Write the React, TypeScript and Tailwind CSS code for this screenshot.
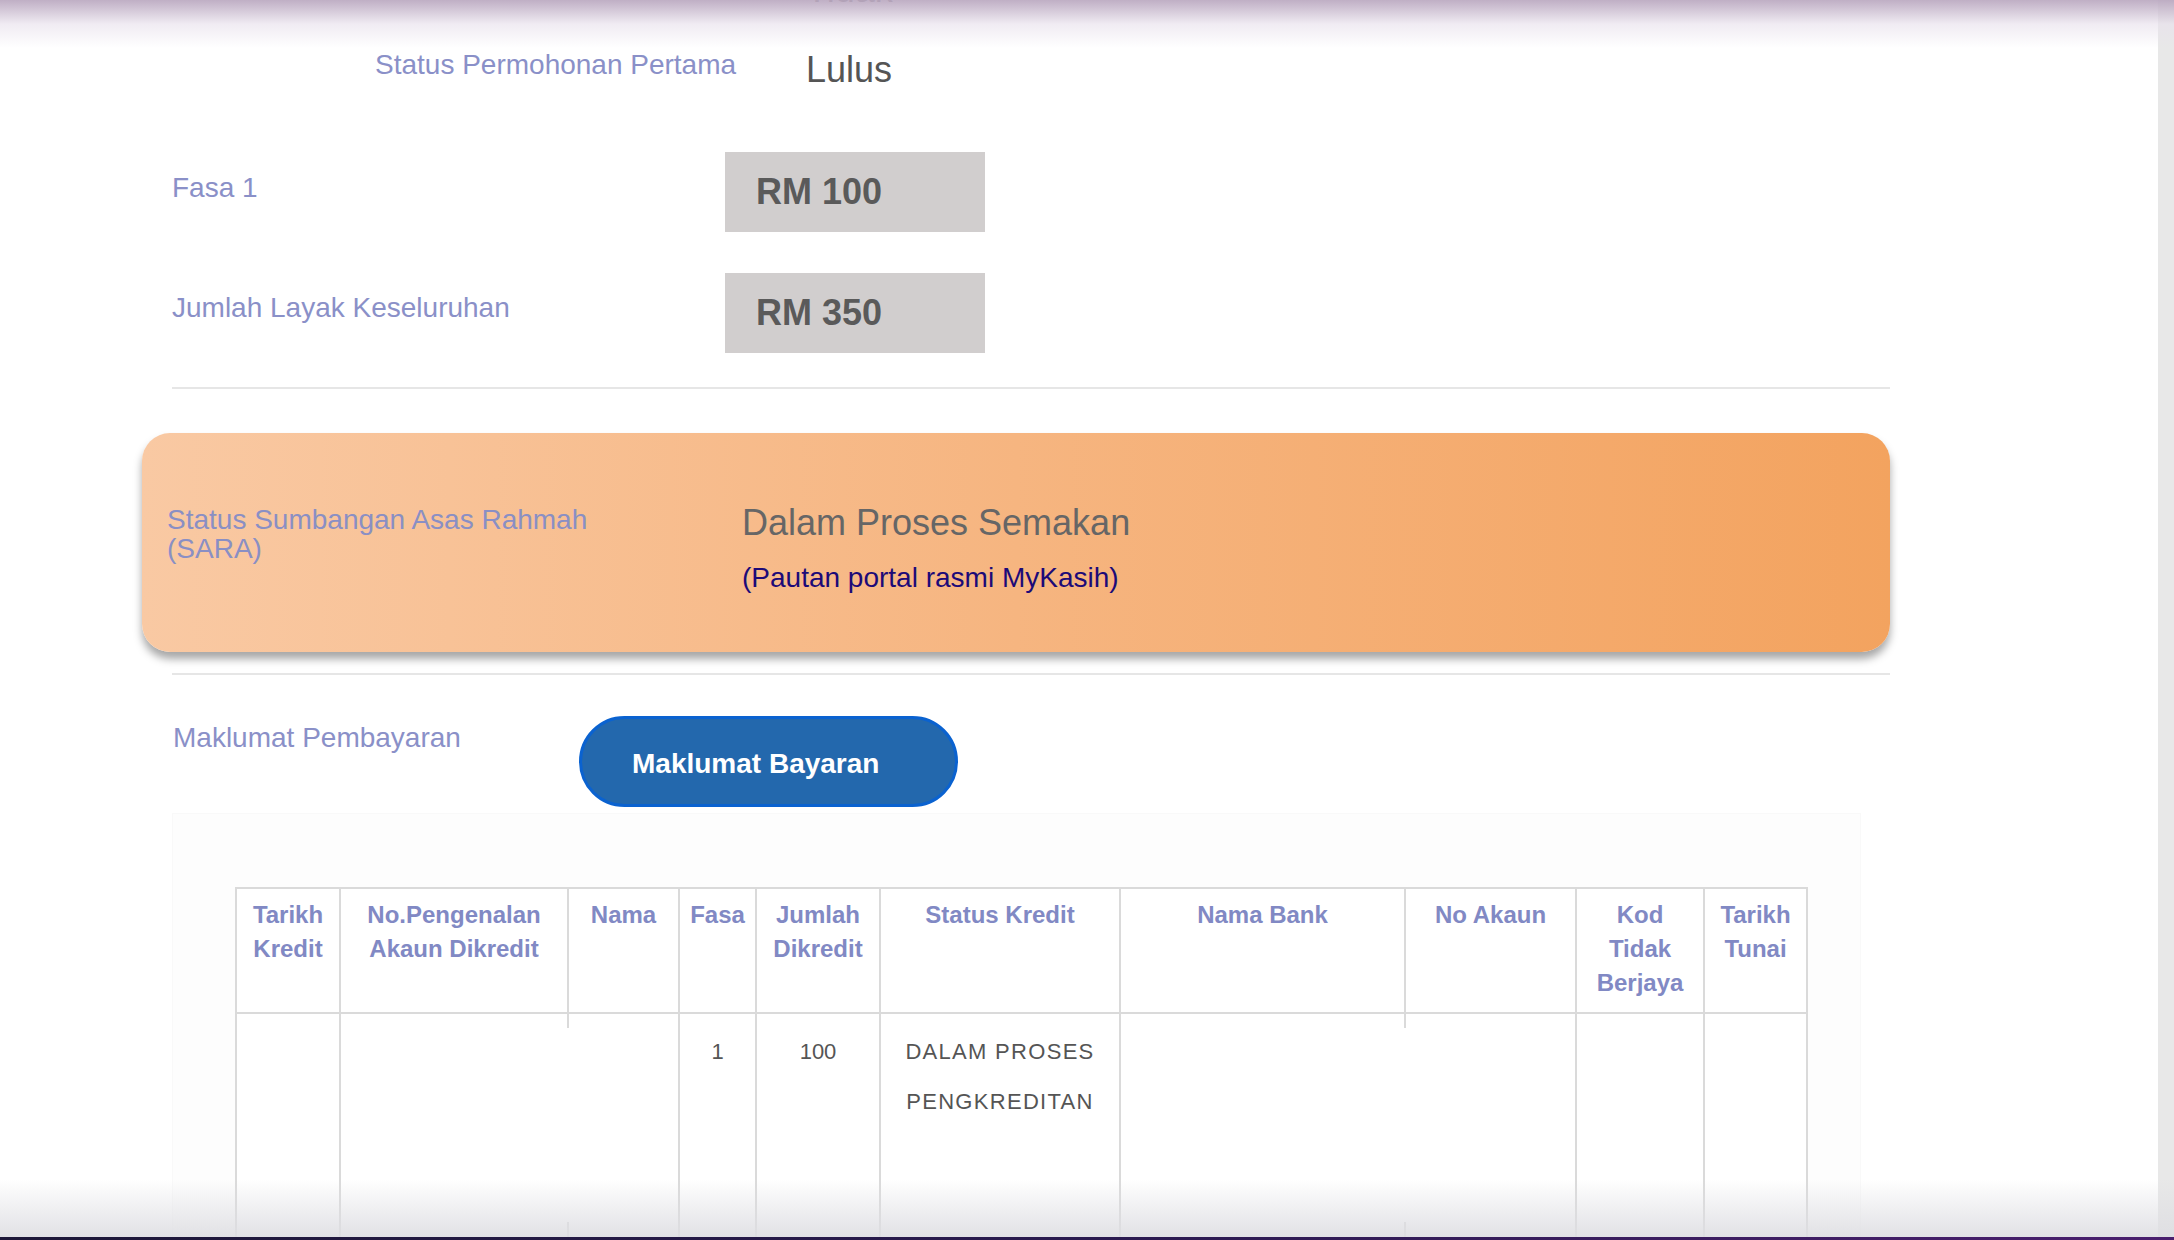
import React from "react";

const headers: { label: string; w: number }[] = [
  { label: "Tarikh Kredit", w: 104 },
  { label: "No.Pengenalan Akaun Dikredit", w: 228 },
  { label: "Nama", w: 111 },
  { label: "Fasa", w: 77 },
  { label: "Jumlah Dikredit", w: 124 },
  { label: "Status Kredit", w: 240 },
  { label: "Nama Bank", w: 285 },
  { label: "No Akaun", w: 171 },
  { label: "Kod Tidak Berjaya", w: 128 },
  { label: "Tarikh Tunai", w: 103 },
];

const row: string[] = ["", "", "", "1", "100", "DALAM PROSES PENGKREDITAN", "", "", "", ""];

export default function App() {
  return (
    <div className="relative flex h-[1240px] w-full overflow-hidden bg-white font-['Liberation_Sans',Arial,sans-serif]">
      <div className="flex-1">
        {/* previous row (cut off) */}
        <div className="mt-[-28px] flex">
          <div className="ml-[806px] text-[36px] leading-none text-[#555555]">Tidak</div>
        </div>

        {/* Status Permohonan Pertama */}
        <div className="mt-[43px] flex items-start">
          <div className="ml-[375px] w-[431px] text-[28px] leading-none text-[#8a90c8]">
            Status Permohonan Pertama
          </div>
          <div className="mt-[1px] text-[36px] leading-none text-[#555555]">Lulus</div>
        </div>

        {/* Fasa 1 */}
        <div className="mt-[64px] flex items-start">
          <div className="ml-[172px] w-[553px] pt-[22px] text-[28px] leading-none text-[#8a90c8]">Fasa 1</div>
          <div className="flex h-[80px] w-[260px] items-center bg-[#d1cece] pl-[31px] text-[36px] font-bold leading-none text-[#5a5a5a]">
            RM 100
          </div>
        </div>

        {/* Jumlah Layak Keseluruhan */}
        <div className="mt-[41px] flex items-start">
          <div className="ml-[172px] w-[553px] pt-[21px] text-[28px] leading-none text-[#8a90c8]">
            Jumlah Layak Keseluruhan
          </div>
          <div className="flex h-[80px] w-[260px] items-center bg-[#d1cece] pl-[31px] text-[36px] font-bold leading-none text-[#5a5a5a]">
            RM 350
          </div>
        </div>

        <div className="ml-[172px] mt-[34px] h-[2px] w-[1718px] bg-[#e6e6e6]" />

        {/* SARA card */}
        <div className="ml-[142px] mt-[44px] flex h-[219px] w-[1748px] items-start rounded-[28px] bg-gradient-to-r from-[#f9c9a3] via-[#f6b580] to-[#f3a35f] shadow-[0_7px_9px_rgba(0,0,0,0.35)]">
          <div className="ml-[25px] mt-[72px] w-[575px]">
            <div className="max-w-[450px] text-[28px] leading-[29px] text-[#8a8fc4]">
              Status Sumbangan Asas Rahmah (SARA)
            </div>
          </div>
          <div className="mt-[72px] flex flex-col">
            <div className="text-[36px] leading-none text-[#666666]">Dalam Proses Semakan</div>
            <a className="mt-[23px] text-[28px] leading-none text-[#1c0a78]">(Pautan portal rasmi MyKasih)</a>
          </div>
        </div>

        <div className="ml-[172px] mt-[21px] h-[2px] w-[1718px] bg-[#e6e6e6]" />

        {/* Maklumat Pembayaran */}
        <div className="mt-[41px] flex items-start">
          <div className="ml-[173px] w-[406px] pt-[8px] text-[28px] leading-none text-[#8a90c8]">
            Maklumat Pembayaran
          </div>
          <button className="h-[91px] w-[379px] rounded-full border-[3px] border-[#0a62d0] bg-[#2368ad] pl-[50px] pt-[4px] text-left text-[28px] font-bold leading-none text-white">
            Maklumat Bayaran
          </button>
        </div>

        {/* Table container */}
        <div className="ml-[172px] mt-[6px] h-[600px] w-[1689px] border border-[#f9f9f9] bg-[#fdfdfd] pl-[62px] pt-[73px]">
          <table className="table-fixed border-collapse bg-white" style={{ width: 1573 }}>
            <colgroup>
              {headers.map((h) => (
                <col key={h.label} style={{ width: h.w }} />
              ))}
            </colgroup>
            <thead>
              <tr>
                {headers.map((h) => (
                  <th
                    key={h.label}
                    className="h-[125px] border-2 border-[#dadada] px-[8px] pt-[9px] text-center align-top text-[24px] font-bold leading-[34px] text-[#8189c4]"
                  >
                    {h.label}
                  </th>
                ))}
              </tr>
            </thead>
            <tbody>
              <tr>
                {row.map((c, i) => (
                  <td
                    key={i}
                    className={
                      i === 5
                        ? "h-[300px] border-2 border-[#dadada] px-[4px] pt-[13px] text-center align-top text-[22px] leading-[50px] tracking-[1.3px] text-[#555555]"
                        : "h-[300px] border-2 border-[#dadada] px-[8px] pt-[13px] text-center align-top text-[22px] leading-[50px] text-[#555555]"
                    }
                  >
                    {c}
                  </td>
                ))}
              </tr>
            </tbody>
          </table>
        </div>
      </div>

      {/* scrollbar strip */}
      <div className="h-full w-[16px] shrink-0 bg-[#e8e8e8]" />

      {/* redaction overlays */}
      <div className="absolute left-[347px] top-[1028px] h-[194px] w-[322px] bg-white" />
      <div className="absolute left-[1132px] top-[1028px] h-[194px] w-[436px] bg-white" />

      {/* top fade */}
      <div className="pointer-events-none absolute left-0 right-0 top-0 h-[48px] bg-gradient-to-b from-[rgba(186,168,192,0.92)] via-[rgba(232,225,236,0.65)] to-[rgba(255,255,255,0)]" />

      {/* bottom fade */}
      <div className="pointer-events-none absolute bottom-[3px] left-0 right-0 h-[58px] bg-gradient-to-b from-[rgba(255,255,255,0)] to-[rgba(222,222,226,0.9)]" />
      <div className="absolute bottom-0 left-0 right-0 h-[3px] bg-gradient-to-r from-[#1d1838] via-[#2a1a4f] to-[#4a1f6e]" />
    </div>
  );
}
